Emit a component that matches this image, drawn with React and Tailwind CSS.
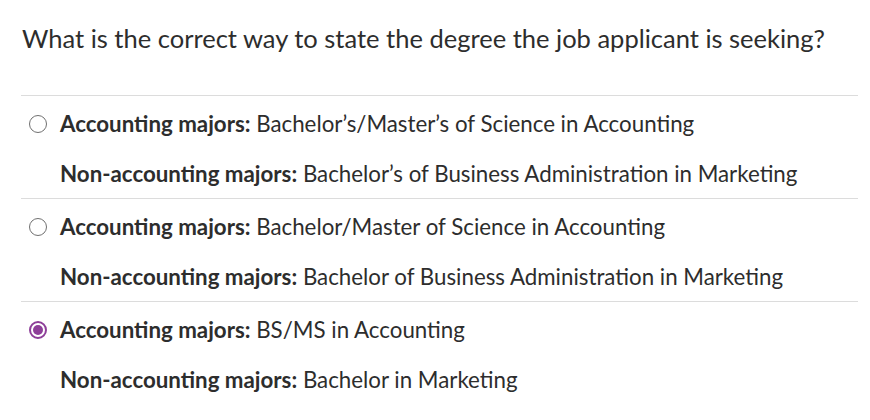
const options = [
  {
    acc: "Bachelor’s/Master’s of Science in Accounting",
    non: "Bachelor’s of Business Administration in Marketing",
    checked: false,
  },
  {
    acc: "Bachelor/Master of Science in Accounting",
    non: "Bachelor of Business Administration in Marketing",
    checked: false,
  },
  {
    acc: "BS/MS in Accounting",
    non: "Bachelor in Marketing",
    checked: true,
  },
];

const Radio = ({ checked }) =>
  checked ? (
    <span className="flex h-[18px] w-[18px] items-center justify-center rounded-full border-2 border-[#8e3f99] bg-white">
      <span className="h-[10px] w-[10px] rounded-full bg-[#8e3f99]" />
    </span>
  ) : (
    <span className="block h-[18px] w-[18px] rounded-full border border-[#707070] bg-white" />
  );

export default function App() {
  return (
    <div
      className="h-[420px] w-[870px] bg-white text-[#2d2d2d]"
      style={{ fontFamily: "Lato, 'Open Sans', sans-serif" }}
    >
      <div className="px-[22px] pt-[20px]">
        <h1 className="text-[25.5px] leading-[36px] font-normal">
          What is the correct way to state the degree the job applicant is seeking?
        </h1>
      </div>
      <div className="mx-[21px] mt-[39px] w-[837px]">
        {options.map((o, i) => (
          <div key={i} className="border-t border-[#dcdcdc] pt-[12px] pb-[8px]">
            <div className="flex items-center h-[32px]">
              <div className="w-[39px] pl-[8px]">
                <Radio checked={o.checked} />
              </div>
              <div className="text-[22.3px]">
                <span className="font-bold">Accounting majors:</span> {o.acc}
              </div>
            </div>
            <div className="mt-[18px] flex items-center h-[32px] pl-[39px] text-[22.3px]">
              <span className="font-bold">Non-accounting majors:</span>&nbsp;{o.non}
            </div>
          </div>
        ))}
      </div>
    </div>
  );
}
